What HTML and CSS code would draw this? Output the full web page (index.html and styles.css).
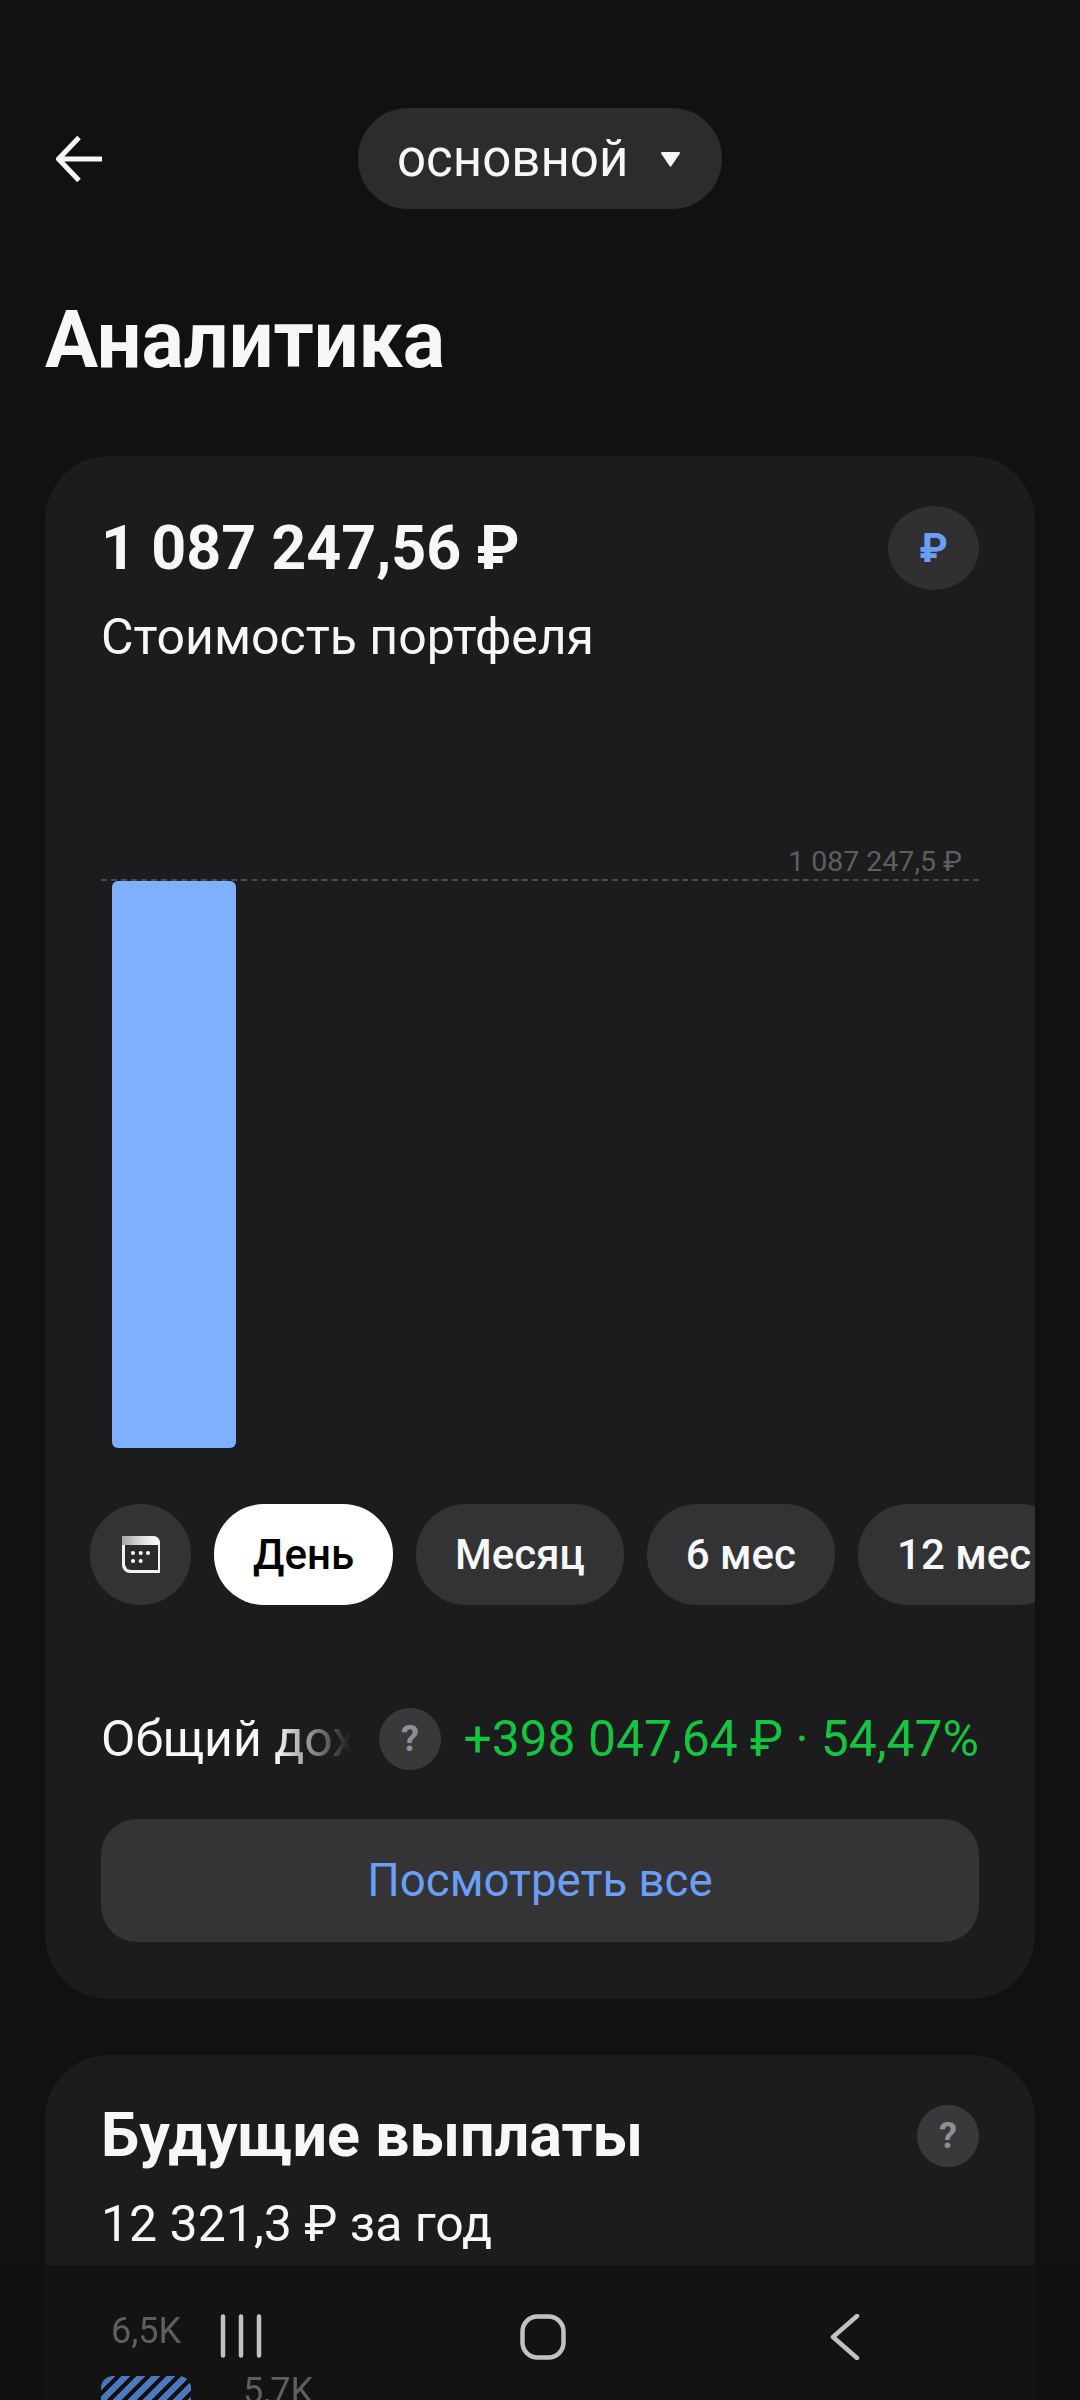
FILE: index.html
```html
<!DOCTYPE html>
<html lang="ru">
<head>
<meta charset="utf-8">
<title>Аналитика</title>
<link rel="stylesheet" href="styles.css">
</head>
<body>
<div class="page">
  <header class="topbar">
    <svg class="back" viewBox="0 0 46 46" width="46" height="46"><path d="M46 23H3M23 1.5 2.5 23 23 44.5" fill="none" stroke="#f5f6f7" stroke-width="5"/></svg>
    <div class="account">
      <span class="account-name">основной</span>
      <svg class="caret" viewBox="0 0 21 16" width="21" height="16"><path d="M2 1h17a1 1 0 0 1 .9 1.500l-8.500 12.500a1 1 0 0 1-1.800 0L1.100 2.500A1 1 0 0 1 2 1z" fill="#f5f6f7"/></svg>
    </div>
    <span></span>
  </header>
  <h1 class="title">Аналитика</h1>

  <section class="card portfolio">
    <div class="summary">
      <div>
        <div class="total">1 087 247,56 ₽</div>
        <div class="caption">Стоимость портфеля</div>
      </div>
      <div class="currency">₽</div>
    </div>
    <div class="chart">
      <div class="chart-label">1 087 247,5 ₽</div>
      <div class="chart-plot"><div class="bar"></div></div>
    </div>
    <div class="periods">
      <button class="period period-icon">
        <svg viewBox="0 0 38 37" width="38" height="37"><defs><linearGradient id="top" x1="0" x2="1"><stop offset="0" stop-color="#a5a5a7"/><stop offset=".5" stop-color="#dcdcdc"/><stop offset="1" stop-color="#fff"/></linearGradient></defs><path d="M0 0h31a7 7 0 0 1 7 7v30H8a8 8 0 0 1-8-8z" fill="#f2f2f2"/><path d="M0 0h31a7 7 0 0 1 7 7v2H0z" fill="url(#top)"/><path d="M3 9h33v25H9a6 6 0 0 1-6-6z" fill="#2b2b2d"/><circle cx="11" cy="17" r="2" fill="#fff"/><circle cx="18.700" cy="17" r="2" fill="#fff"/><circle cx="26" cy="17" r="2" fill="#fff"/><circle cx="11" cy="25" r="2" fill="#fff"/><circle cx="18.700" cy="25" r="2" fill="#fff"/></svg>
      </button>
      <button class="period period-active">День</button>
      <button class="period">Месяц</button>
      <button class="period">6 мес</button>
      <button class="period">12 мес</button>
    </div>
    <div class="income">
      <span class="income-label">Общий доход</span>
      <span class="help help-income">?</span>
      <span class="income-value">+398 047,64 ₽ · 54,47%</span>
    </div>
    <button class="view-all">Посмотреть все</button>
  </section>

  <section class="card payouts">
    <div class="payouts-head">
      <h2 class="payouts-title">Будущие выплаты</h2>
      <span class="help">?</span>
    </div>
    <div class="caption payouts-sum">12 321,3 ₽ за год</div>
    <div class="payout-bars">
      <div class="payout-col">
        <div class="payout-value">6,5K</div>
        <div class="payout-bar"></div>
      </div>
      <div class="payout-col payout-col-low">
        <div class="payout-value">5,7K</div>
        <div class="payout-bar"></div>
      </div>
    </div>
  </section>
</div>
<nav class="navbar">
  <div class="nav-cell"><svg viewBox="0 0 42 44" width="42" height="44"><path d="M3 2.500v39M21 2.500v39M39 2.500v39" stroke="#c2c2c2" stroke-width="4.500" stroke-linecap="round"/></svg></div>
  <div class="nav-cell"><svg viewBox="0 0 46 46" width="46" height="46"><rect x="2.500" y="2.500" width="41" height="41" rx="15" fill="none" stroke="#c2c2c2" stroke-width="4.500"/></svg></div>
  <div class="nav-cell"><svg viewBox="0 0 30 46" width="30" height="46"><path d="M27 2 3 23l24 21" fill="none" stroke="#c2c2c2" stroke-width="4.500" stroke-linecap="round" stroke-linejoin="round"/></svg></div>
</nav>
</body>
</html>
```
FILE: styles.css
```css
* { box-sizing: border-box; }
html, body { margin: 0; padding: 0; height: 2400px; overflow: hidden; }
body { background: #111112; color: #f6f7f8; font-family: Roboto, "Noto Sans", sans-serif; }
button { font-family: inherit; border: 0; margin: 0; }

.page { padding: 108px 45px 0; height: 2400px; overflow: hidden; }

.topbar { display: grid; grid-template-columns: 1fr auto 1fr; align-items: center; height: 101px; }
.back { margin-left: 11px; }
.account { display: flex; align-items: center; gap: 32px; width: 364px; height: 101px; padding: 0 39px; border-radius: 50px; background: #2c2c2e; }
.account-name { font-size: 51px; line-height: 1; }
.caret { display: block; flex: none; }

.title { margin: 87px 0 0; font-size: 79px; line-height: 88px; font-weight: 700; }

.card { background: #1c1c1e; border-radius: 64px; padding: 0 56px; overflow: hidden; }
.portfolio { margin-top: 72px; height: 1543px; padding-top: 50px; }
.summary { display: flex; justify-content: space-between; align-items: flex-start; }
.total { font-size: 61px; line-height: 84px; font-weight: 700; }
.caption { font-size: 50px; line-height: 60px; }
.summary .caption { margin-top: 17px; }
.currency { width: 91px; height: 84px; border-radius: 50%; background: #303032; color: #6a9ff5; display: flex; align-items: center; justify-content: center; font-size: 40px; font-weight: 700; }

.chart { margin-top: 178px; }
.chart-label { text-align: right; padding-right: 17px; font-size: 28.500px; line-height: 34px; color: #5e5e61; }
.chart-plot { border-top: 2px dashed #4a4a4c; height: 568px; }
.bar { margin-left: 11px; width: 124px; height: 567px; background: #7eb0ff; border-radius: 6px; }

.periods { display: flex; gap: 23px; margin: 57px -56px 0 -11px; }
.period { flex: none; height: 101px; padding: 0 39px; border-radius: 50px; background: #333335; color: #f6f7f8; font-size: 42px; font-weight: 500; }
.period-icon { width: 101px; padding: 0; display: flex; align-items: center; justify-content: center; }
.period-active { background: #fff; color: #000; }

.income { display: flex; align-items: center; margin-top: 102px; height: 63px; }
.income-label { width: 250px; font-size: 50px; white-space: nowrap; overflow: hidden; -webkit-mask-image: linear-gradient(to right, #000 70%, transparent 100%); mask-image: linear-gradient(to right, #000 70%, transparent 100%); }
.help { flex: none; width: 62px; height: 62px; border-radius: 50%; background: #39393c; color: #8f8f96; display: flex; align-items: center; justify-content: center; font-size: 36px; font-weight: 700; }
.help-income { margin-left: 28px; }
.income-value { margin-left: auto; font-size: 49.800px; color: #15c43f; white-space: nowrap; }

.view-all { display: block; width: 100%; height: 123px; margin-top: 49px; border-radius: 36px; background: #343436; color: #6a9ff5; font-size: 45.600px; }

.payouts { margin-top: 56px; padding-top: 41px; height: 600px; }
.payouts-head { display: flex; justify-content: space-between; align-items: flex-start; }
.payouts-title { margin: 0; font-size: 61px; line-height: 78px; font-weight: 700; }
.payouts-head .help { margin-top: 9px; }
.payouts-sum { margin-top: 20px; }

.payout-bars { display: flex; gap: 42px; margin-top: 57px; position: relative; z-index: 2; }
.payout-col { width: 90px; display: flex; flex-direction: column; align-items: center; }
.payout-col-low { padding-top: 60px; }
.payout-value { font-size: 36px; line-height: 40px; color: #5f5f62; white-space: nowrap; }
.payout-bar { width: 90px; height: 200px; margin-top: 25px; border-radius: 12px; background: repeating-linear-gradient(135deg, #111 0 4px, #4a78c0 4px 10.600px); }

.navbar { position: fixed; z-index: 1; left: 0; right: 0; bottom: 0; height: 135px; background: rgba(17,17,18,.78); display: flex; padding: 49px 0 0 90px; }
.nav-cell { width: 302px; display: flex; justify-content: center; align-items: flex-start; }
```
